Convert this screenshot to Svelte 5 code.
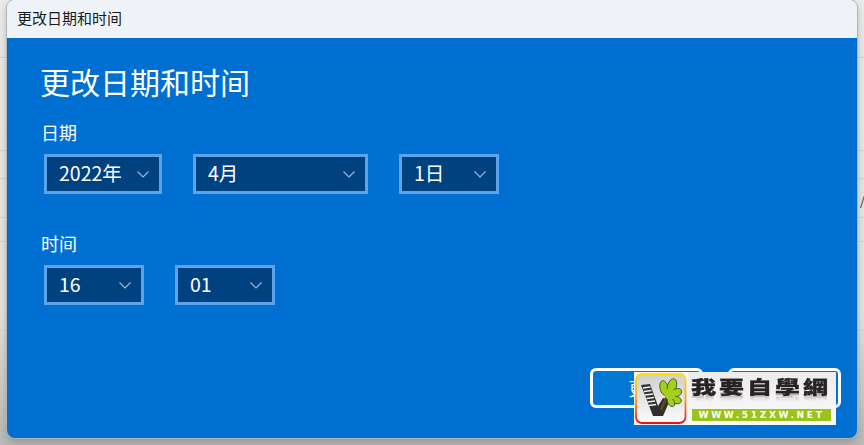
<script>
  const dateSelects = [
    { value: "2022年", width: 118 },
    { value: "4月", width: 175 },
    { value: "1日", width: 100 }
  ];
  const timeSelects = [
    { value: "16", width: 100 },
    { value: "01", width: 100 }
  ];
  const bgLines = [57, 150, 178, 217, 241, 330];
  const lobes = [
    { cx: 30, cy: 16, rx: 4, ry: 7.5, r: -12 },
    { cx: 38, cy: 14, rx: 4.4, ry: 7.5, r: 18 },
    { cx: 42, cy: 21, rx: 4, ry: 6, r: 62 },
    { cx: 42, cy: 28, rx: 3.6, ry: 5.5, r: 105 },
    { cx: 37, cy: 30, rx: 3.2, ry: 5, r: 150 }
  ];
</script>

{#snippet select(item)}
  <div class="select" style="width: {item.width}px">
    <span>{item.value}</span>
    <svg width="14" height="8" viewBox="0 0 14 8"><path d="M1.500 1.500 7 7l5.500-5.500" /></svg>
  </div>
{/snippet}

<main>
  {#each bgLines as y}
    <i class="line" style="top: {y}px"></i>
  {/each}
  <span class="behind">/</span>

  <section class="dialog">
    <header>更改日期和时间</header>
    <div class="body">
      <h1>更改日期和时间</h1>
      <div class="label">日期</div>
      <div class="row gap-date">
        {#each dateSelects as item}
          {@render select(item)}
        {/each}
      </div>
      <div class="label second">时间</div>
      <div class="row gap-time">
        {#each timeSelects as item}
          {@render select(item)}
        {/each}
      </div>
      <footer>
        <button class="primary">更改</button>
        <button>取消</button>
      </footer>
    </div>
  </section>

  <div class="stamp">
    <div class="badge">
      <svg width="54" height="52" viewBox="0 0 54 52">
        <defs>
          <linearGradient id="rim" x1="0" y1="0" x2="0" y2="1">
            <stop offset="0" stop-color="#ffe000" />
            <stop offset="0.5" stop-color="#f7a520" />
            <stop offset="1" stop-color="#e8141c" />
          </linearGradient>
          <linearGradient id="fill" x1="0" y1="0" x2="0" y2="1">
            <stop offset="0" stop-color="#cfcfcf" />
            <stop offset="1" stop-color="#fbfbfb" />
          </linearGradient>
        </defs>
        <rect x="2" y="2" width="49.500" height="49" rx="6" fill="url(#fill)" stroke="url(#rim)" stroke-width="1.800" />
        <path d="M7 13 16 12 24 34 29 26 36 28 29 44 19 44Z" fill="#332f2f" />
        <path d="M9 16 16.500 15M10 19.500 17.500 18.500M11 23 19 22M12.500 26.500 20 25.500M13.500 30 21 29M15 33.500 22 32.500" stroke="#f0f0f0" stroke-width="1.700" fill="none" />
        <path d="M27 38 33 24" stroke="#5d4a1e" stroke-width="2.600" fill="none" />
        {#each lobes as lobe}
          <ellipse cx={lobe.cx} cy={lobe.cy} rx={lobe.rx} ry={lobe.ry} transform="rotate({lobe.r} {lobe.cx} {lobe.cy})" fill="#a3d01f" stroke="#44520f" stroke-width="0.800" />
        {/each}
        <circle cx="36" cy="22" r="5.500" fill="#a3d01f" />
      </svg>
    </div>
    <div class="stamp-right">
      <div class="stamp-name">我要自學網</div>
      <div class="stamp-url">WWW.51ZXW.NET</div>
    </div>
  </div>
</main>

<style>
  :global(body) {
    margin: 0;
    background: #e2e2e2;
  }
  main {
    position: relative;
    width: 864px;
    height: 445px;
    overflow: hidden;
    padding-left: 7px;
    box-sizing: border-box;
    background: linear-gradient(#ececec, #e4e4e4 70%, #b9b9b9);
    font-family: "Noto Sans CJK SC", "Segoe UI", sans-serif;
  }
  .line {
    position: absolute;
    left: 0;
    right: 0;
    height: 1px;
    background: #d4d4d4;
  }
  .behind {
    position: absolute;
    left: 860px;
    top: 192px;
    font-size: 12px;
    color: #222;
  }
  .dialog {
    position: relative;
    width: 850px;
    height: 438px;
    border-radius: 8px;
    overflow: hidden;
    display: flex;
    flex-direction: column;
    box-shadow: 0 0 0 1px #b4b4b4, 0 3px 10px rgba(0, 0, 0, 0.25);
  }
  header {
    height: 38px;
    flex: none;
    box-sizing: border-box;
    background: #eff3f8;
    color: #1a1a1a;
    font-size: 15px;
    line-height: 36px;
    padding-left: 10px;
  }
  .body {
    flex: 1;
    background: #006fd2;
    color: #fff;
    padding: 0 16px 0 34px;
    display: flex;
    flex-direction: column;
  }
  h1 {
    margin: 23px 0 0 -1px;
    font-size: 30px;
    font-weight: 400;
    line-height: 40px;
  }
  .label {
    font-size: 18px;
    line-height: 24px;
    margin-top: 19px;
  }
  .label.second {
    margin-top: 37px;
  }
  .row {
    display: flex;
    margin: 10px 0 0 3px;
  }
  .gap-date {
    gap: 31px;
  }
  .gap-time {
    gap: 31px;
  }
  .select {
    height: 40px;
    box-sizing: border-box;
    border: 3px solid #5da3ea;
    background: #004280;
    display: flex;
    align-items: center;
    justify-content: space-between;
    padding: 0 9px 0 12px;
    font-size: 19.500px;
  }
  .select span {
    margin-bottom: 4px;
  }
  .select svg {
    fill: none;
    stroke: #9db9d6;
    stroke-width: 1.100;
  }
  footer {
    margin-top: auto;
    margin-bottom: 30px;
    display: flex;
    justify-content: flex-end;
    gap: 25px;
  }
  button {
    width: 113px;
    height: 40px;
    box-sizing: border-box;
    border: 3px solid #fff;
    border-radius: 6px;
    background: #006fd2;
    color: #fff;
    font: inherit;
    font-size: 18px;
    padding: 0;
  }
  button.primary {
    background: #0078d4;
  }
  .stamp {
    position: absolute;
    left: 634px;
    top: 372px;
    width: 200px;
    height: 53px;
    background: #f4f4f4;
    display: flex;
  }
  .badge {
    width: 54px;
    height: 52px;
    flex: none;
  }
  .stamp-right {
    flex: 1;
    display: flex;
    flex-direction: column;
    padding: 0 5px 0 4px;
    background: linear-gradient(#ececec, #fafafa);
  }
  .stamp-name {
    margin: 3px 0 0 -1px;
    height: 22px;
    line-height: 22px;
    font-size: 25px;
    font-weight: 900;
    color: #282223;
    white-space: nowrap;
    letter-spacing: 3px;
    -webkit-text-stroke: 0.400px #282223;
    transform: scaleY(0.74);
    -webkit-box-reflect: below -3px linear-gradient(transparent 45%, rgba(255, 255, 255, 0.45));
  }
  .stamp-url {
    margin-top: 12px;
    height: 12px;
    background: #9bc31c;
    color: #fff;
    font-family: "DejaVu Sans", sans-serif;
    font-weight: 700;
    font-size: 9px;
    line-height: 12px;
    letter-spacing: 2.700px;
    text-align: center;
    white-space: nowrap;
  }
</style>
